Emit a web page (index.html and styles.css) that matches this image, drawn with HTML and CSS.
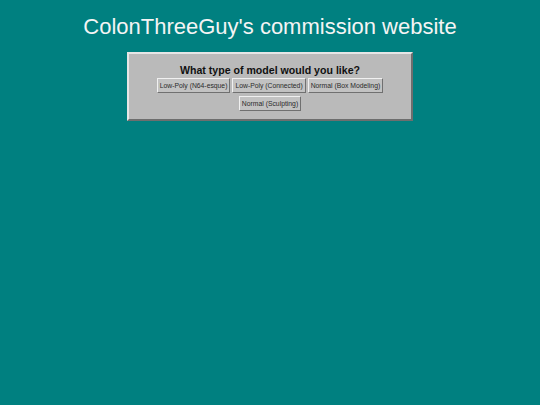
FILE: index.html
```html
<!DOCTYPE html>
<html>
<head>
<meta charset="utf-8">
<link rel="stylesheet" href="styles.css">
</head>
<body>
<h1 class="title">ColonThreeGuy's commission website</h1>
<div class="panel">
  <h2 class="question">What type of model would you like?</h2>
  <div class="choices">
    <button class="choice">Low-Poly (N64-esque)</button>
    <button class="choice">Low-Poly (Connected)</button>
    <button class="choice">Normal (Box Modeling)</button>
    <button class="choice">Normal (Sculpting)</button>
  </div>
</div>
</body>
</html>
```
FILE: styles.css
```css
html, body {
  margin: 0;
  padding: 0;
  background: #008080;
  font-family: "Comic Sans MS", "Liberation Sans", sans-serif;
}
.title {
  margin: 0;
  padding-top: 13px;
  height: 40px;
  box-sizing: border-box;
  text-align: center;
  color: #f4f4f4;
  font-weight: normal;
  font-size: 22px;
  line-height: 28px;
}
.panel {
  width: 286px;
  box-sizing: border-box;
  margin: 12px auto 0;
  background: #bababa;
  border: 2px solid;
  border-color: #e6e6e6 #6e6e6e #6e6e6e #e6e6e6;
  padding: 9px 4px 8px;
  height: 69px;
}
.question {
  margin: 0;
  text-align: center;
  font-size: 10.6px;
  line-height: 14px;
  font-weight: bold;
  color: #111;
}
.choices {
  display: flex;
  flex-wrap: wrap;
  justify-content: center;
  gap: 3px 2px;
  margin-top: 1px;
}
.choice {
  font-family: "Comic Sans MS", "Liberation Sans", sans-serif;
  font-size: 6.8px;
  height: 15px;
  padding: 0 2px;
  background: #c2c2c2;
  color: #2a2a2a;
  border: 1px solid;
  border-color: #f0f0f0 #707070 #707070 #f0f0f0;
}
```
